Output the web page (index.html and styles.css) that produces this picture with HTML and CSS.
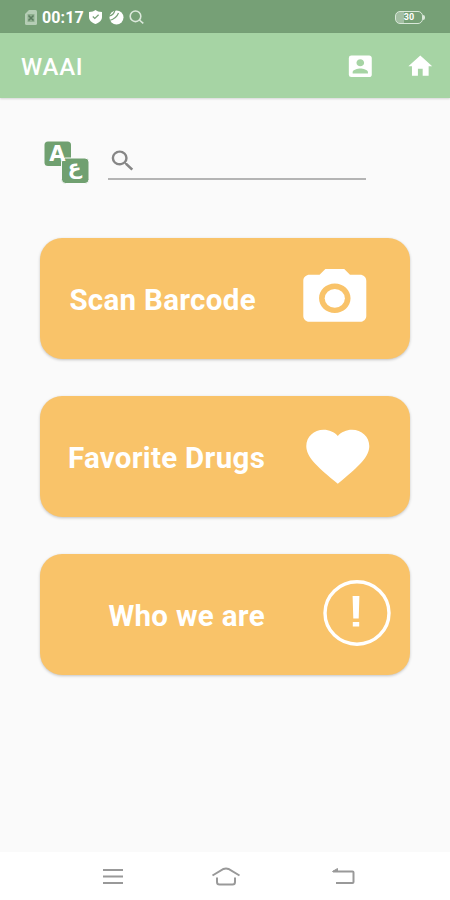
FILE: index.html
```html
<!DOCTYPE html>
<html lang="en">
<head>
  <meta charset="UTF-8" />
  <meta name="viewport" content="width=device-width, initial-scale=1.0" />
  <title>WAAI</title>
  <link rel="stylesheet" href="styles.css">
</head>
<body>
  <div class="status-bar">
    <svg class="sim" viewBox="0 0 12 15"><path d="M4 0h6.500A1.500 1.500 0 0 1 12 1.500v12a1.500 1.500 0 0 1-1.500 1.500h-9A1.500 1.500 0 0 1 0 13.500V4z" fill="#b5cdb5"/><path d="M2.500 4h7v8h-7z" fill="#8fb08f"/><path d="M3.500 5.500l5 5M8.500 5.500l-5 5" stroke="#5c7c60" stroke-width="1.500"/></svg>
    <span class="time">00:17</span>
    <svg class="shield" viewBox="0 0 13 14"><path d="M6.500 0C8 1.300 10 2 13 2v5c0 3.500-2.500 5.500-6.500 7C2.500 12.500 0 10.500 0 7V2c3 0 5-.7 6.500-2z" fill="#fff"/><path d="M3.800 6.500l2 2 3.800-3.700" fill="none" stroke="#76a076" stroke-width="1.200"/></svg>
    <svg class="ball" viewBox="0 0 15 15"><circle cx="7.500" cy="7.500" r="7" fill="#fff"/><path d="M0 10.500C5 9.500 8 7 9.500 3M0 6C3 5.500 5 4 6 0" fill="none" stroke="#76a076" stroke-width="1.200"/></svg>
    <svg class="find" viewBox="0 0 15 14"><circle cx="6.500" cy="6.300" r="5.300"/><path d="M10.300 10l4 3.400"/></svg>
    <div class="battery"><span>30</span></div>
  </div>

  <header class="app-bar">
    <h1>WAAI</h1>
    <svg class="account" viewBox="0 0 24 24" preserveAspectRatio="none"><path d="M3 5v14a2 2 0 0 0 2 2h14c1.100 0 2-.9 2-2V5c0-1.100-.9-2-2-2H5a2 2 0 0 0-2 2zm12 4c0 1.660-1.340 3-3 3s-3-1.340-3-3 1.340-3 3-3 3 1.340 3 3zm-9 8c0-2 4-3.100 6-3.100s6 1.100 6 3.100v1H6v-1z"/></svg>
    <svg class="home" viewBox="0 0 24 24"><path d="M10 20v-6h4v6h5v-8h3L12 3 2 12h3v8z"/></svg>
  </header>

  <main>
    <div class="search-row">
      <svg class="lang" viewBox="0 0 46 43">
        <rect x="0.500" y="0.500" width="26.500" height="24.500" rx="3.500"/>
        <rect x="17.500" y="17" width="27.500" height="25.500" rx="4" stroke="#fafafa" stroke-width="1"/>
        <text class="latin" x="13.300" y="20">A</text>
        <text class="arabic" x="30.500" y="32.500">ع</text>
      </svg>
      <div class="search-box">
        <svg viewBox="0 0 24 24" preserveAspectRatio="none"><path d="M15.500 14h-.79l-.28-.27A6.471 6.471 0 0 0 16 9.500 6.500 6.500 0 1 0 9.500 16c1.610 0 3.090-.59 4.230-1.570l.27.28v.79l5 4.990L20.490 19l-4.990-5zm-6 0C7.010 14 5 11.990 5 9.500S7.010 5 9.500 5 14 7.010 14 9.500 11.990 14 9.500 14z"/></svg>
      </div>
    </div>

    <div class="card scan">
      <span>Scan Barcode</span>
      <svg viewBox="0 0 24 24" preserveAspectRatio="none"><circle cx="12" cy="12" r="3.200"/><path d="M9 2L7.170 4H4c-1.100 0-2 .9-2 2v12c0 1.100.9 2 2 2h16c1.100 0 2-.9 2-2V6c0-1.100-.9-2-2-2h-3.170L15 2H9zm3 15c-2.760 0-5-2.240-5-5s2.240-5 5-5 5 2.240 5 5-2.240 5-5 5z"/></svg>
    </div>

    <div class="card favorite">
      <span>Favorite Drugs</span>
      <svg viewBox="0 0 24 24" preserveAspectRatio="none"><path d="M12 21.350l-1.450-1.320C5.400 15.360 2 12.280 2 8.500 2 5.420 4.420 3 7.500 3c1.740 0 3.410.81 4.500 2.090C13.090 3.810 14.760 3 16.500 3 19.580 3 22 5.420 22 8.500c0 3.780-3.400 6.860-8.550 11.540L12 21.350z"/></svg>
    </div>

    <div class="card about">
      <span>Who we are</span>
      <svg viewBox="0 0 68 66"><ellipse cx="34" cy="33" rx="32" ry="31.200" fill="none" stroke="#fff" stroke-width="3.400"/><path d="M29.600 16h6.800l-.7 22.500h-5.400zM29.800 42h6.400v4.500h-6.400z"/></svg>
    </div>
  </main>

  <nav class="system-nav">
    <svg class="menu" viewBox="0 0 22 17"><path d="M1 2h20M1 8.500h20M1 15h20"/></svg>
    <svg class="house" viewBox="0 0 30 19"><path d="M1.500 8.500L12.500 2q2.500-1.200 5 0l11 6.500M6 10.500v4.500q0 2.500 2.500 2.500h13q2.500 0 2.500-2.500v-4.500"/></svg>
    <svg class="back" viewBox="0 0 23 17"><path d="M1 3.500h19.500q1 0 1 1v9.500q0 1-1 1H4"/><path class="tip" d="M.5 3.500L5.500.5v3z"/></svg>
  </nav>
</body>
</html>
```
FILE: styles.css
```css
:root {
  --green: #a6d4a4;
  --green-dark: #76a076;
  --orange: #f9c369;
  --bg: #fafafa;
  --font: Roboto, "Liberation Sans", sans-serif;
}
* { box-sizing: border-box; margin: 0; padding: 0; }
body {
  width: 450px;
  height: 900px;
  background: var(--bg);
  font-family: var(--font);
  display: flex;
  flex-direction: column;
  overflow: hidden;
}
svg { display: block; flex: none; }

.status-bar {
  height: 33px;
  background: var(--green-dark);
  color: #fff;
  display: flex;
  align-items: center;
  padding: 1px 24px 0 25px;
}
.sim { width: 12px; height: 15px; }
.time {
  width: 42px;
  margin-left: 5px;
  font-size: 16px;
  font-weight: 700;
  letter-spacing: 0.100px;
  white-space: nowrap;
}
.shield { width: 13px; height: 14px; margin-left: 5px; }
.ball { width: 15px; height: 15px; margin-left: 7px; }
.find {
  width: 15px;
  height: 14px;
  margin-left: 5px;
  fill: none;
  stroke: #dce9dc;
  stroke-width: 1.600;
}
.battery {
  position: relative;
  width: 28px;
  height: 13px;
  margin-left: auto;
  margin-right: 3px;
  border: 1.500px solid #d9e8d9;
  border-radius: 5px;
  background: linear-gradient(90deg, #a3bfa3 30%, transparent 30%);
  font-size: 9px;
  font-weight: 700;
  line-height: 11px;
  text-align: center;
}
.battery::after {
  content: "";
  position: absolute;
  right: -3px;
  top: 3px;
  width: 2px;
  height: 5px;
  border-radius: 0 2px 2px 0;
  background: #d9e8d9;
}

.app-bar {
  height: 65px;
  background: var(--green);
  box-shadow: 0 1px 2px rgba(0,0,0,0.15);
  display: flex;
  align-items: center;
  padding: 1px 15px 0 21px;
}
.app-bar h1 {
  margin-right: auto;
  padding-top: 1px;
  color: #fff;
  font-size: 24px;
  font-weight: 500;
  letter-spacing: 0.800px;
}
.app-bar svg { fill: #fff; }
.account { width: 30.600px; height: 28.600px; }
.home { width: 28.600px; height: 28.600px; margin-left: 31px; }

main {
  flex: 1;
  padding: 43px 40px 0;
  display: flex;
  flex-direction: column;
}
.search-row {
  height: 43px;
  margin: 0 44.500px 54px 4px;
  display: flex;
}
.lang {
  width: 46px;
  height: 43px;
  fill: #70a070;
}
.lang text { fill: #fff; font-weight: 700; text-anchor: middle; }
.latin { font-family: "DejaVu Sans", sans-serif; font-size: 21px; }
.arabic { font-family: "DejaVu Sans", sans-serif; font-size: 20px; }
.search-box {
  flex: 1;
  height: 39px;
  margin-left: 18px;
  padding-top: 6px;
  border-bottom: 2px solid #b4b4b4;
}
.search-box svg { width: 29.500px; height: 27.600px; fill: #868686; }

.card {
  height: 120.500px;
  margin: 0 0 37.500px 0.400px;
  display: flex;
  align-items: center;
  background: var(--orange);
  border-radius: 22px;
  box-shadow: 0 1px 3px rgba(0,0,0,0.22);
  color: #fff;
  font-size: 29.500px;
  font-weight: 700;
  white-space: nowrap;
}
.card span { padding-top: 3px; letter-spacing: 0.300px; }
.card svg { width: 75.600px; height: 70.600px; margin-left: auto; fill: #fff; }
.scan { padding: 0 37.500px 0 29px; }
.favorite { padding: 0 34px 0 27.500px; }
.about { padding: 0 19px 2.500px 68px; }
.about span { padding-top: 5px; }
.about svg { width: 68px; height: 66px; }

.system-nav {
  height: 48px;
  background: #fff;
  display: flex;
  align-items: center;
  padding-left: 102px;
}
.system-nav svg { fill: none; stroke: #999; stroke-width: 2; }
.menu { width: 22px; height: 17px; }
.house { width: 30px; height: 19px; margin-left: 87px; }
.back { width: 23px; height: 17px; margin-left: 91px; }
.system-nav .tip { fill: #999; stroke-width: 1; }
```
